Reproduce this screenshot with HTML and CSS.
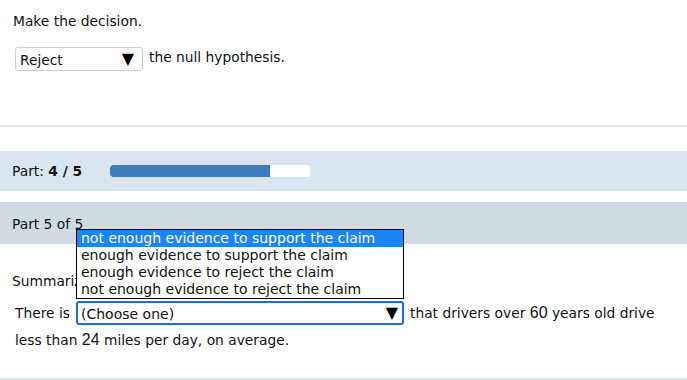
FILE: index.html
```html
<!DOCTYPE html>
<html>
<head>
<meta charset="utf-8">
<link rel="stylesheet" href="styles.css">
</head>
<body>
<div class="decision">
  <div class="prompt">Make the decision.</div>
  <div class="row">
    <div class="sel sel-plain"><span>Reject</span><span class="arrow">▼</span></div>
    <span class="after">the null hypothesis.</span>
  </div>
</div>
<div class="rule"></div>
<div class="partbar">
  <span class="partlabel">Part: <b>4 / 5</b></span>
  <div class="progress"><div class="fill" style="width:80%"></div></div>
</div>
<div class="parthead">Part 5 of 5</div>
<div class="content">
  <div class="summ">Summarize the results.</div>
  <div class="row row2">
    <span class="before">There is</span>
    <div class="selwrap">
      <div class="sel sel-focus"><span>(Choose one)</span><span class="arrow">▼</span></div>
      <ul class="popup">
        <li class="hi">not enough evidence to support the claim</li>
        <li>enough evidence to support the claim</li>
        <li>enough evidence to reject the claim</li>
        <li>not enough evidence to reject the claim</li>
      </ul>
    </div>
    <span class="after">that drivers over <span class="num">60</span> years old drive</span>
  </div>
  <div class="line2">less than <span class="num">24</span> miles per day, on average.</div>
</div>
<div class="rule rule-bottom"></div>
</body>
</html>
```
FILE: styles.css
```css
html, body {
  margin: 0;
  padding: 0;
  background: #fff;
}
body {
  font-family: "DejaVu Sans", Verdana, sans-serif;
  font-size: 13.8px;
  color: #111;
  width: 687px;
  height: 380px;
  overflow: hidden;
}
.decision {
  padding: 12px 0 0 13px;
  height: 125px;
  box-sizing: border-box;
}
.prompt {
  line-height: 18px;
}
.row {
  display: flex;
  align-items: center;
  margin-top: 17px;
}
.decision .row {
  padding-left: 2px;
}
.sel {
  display: flex;
  align-items: center;
  justify-content: space-between;
  box-sizing: border-box;
  background: #fff;
}
.sel-plain {
  width: 128px;
  height: 24px;
  border: 1px solid #cfcfcf;
  border-radius: 3px;
  padding: 0 8px 0 4px;
  font-size: 13.8px;
}
.sel-plain span:first-child {
  padding-top: 2px;
}
.arrow {
  font-size: 16px;
  line-height: 16px;
  color: #000;
}
.after {
  margin-left: 6px;
  position: relative;
  top: -2px;
}
.rule {
  height: 2px;
  background: #dde3e7;
}
.partbar {
  margin-top: 24px;
  height: 40px;
  background: #d9e6f1;
  display: flex;
  align-items: center;
  padding-left: 12px;
}
.partlabel {
  width: 98px;
}
.partlabel b {
  font-weight: bold;
}
.progress {
  width: 200px;
  height: 12px;
  background: #fff;
  border-radius: 3px;
  overflow: hidden;
}
.fill {
  height: 100%;
  background: #3d7dbf;
  border-radius: 3px 0 0 3px;
}
.parthead {
  margin-top: 11px;
  height: 42px;
  background: #d0dbe1;
  padding: 14px 0 0 12px;
  box-sizing: border-box;
}
.content {
  padding: 28px 0 0 12px;
  height: 134px;
  box-sizing: border-box;
}
.summ {
  line-height: 18px;
}
.row2 {
  margin-top: 11px;
  padding-left: 3px;
}
.before {
  width: 61px;
}
.selwrap {
  position: relative;
}
.sel-focus {
  width: 328px;
  height: 24px;
  border: 2px solid #1b6fd8;
  border-radius: 3px;
  padding: 0 4px 0 3px;
  font-size: 14px;
}
.sel-focus span:first-child {
  padding-top: 2px;
}
.popup {
  position: absolute;
  left: 0;
  bottom: 26px;
  margin: 0;
  padding: 0;
  list-style: none;
  width: 328px;
  box-sizing: border-box;
  border: 1px solid #000;
  background: #fff;
  font-size: 14px;
}
.popup li {
  height: 17px;
  line-height: 17px;
  padding-left: 4px;
  white-space: nowrap;
}
.popup li.hi {
  background: #1a84fb;
  color: #fff;
}
.row2 .after {
  top: 0;
}
.num {
  font-family: "Liberation Sans", Arial, sans-serif;
  font-size: 16px;
}
.line2 {
  margin-top: 6px;
  padding-left: 3px;
}
```
